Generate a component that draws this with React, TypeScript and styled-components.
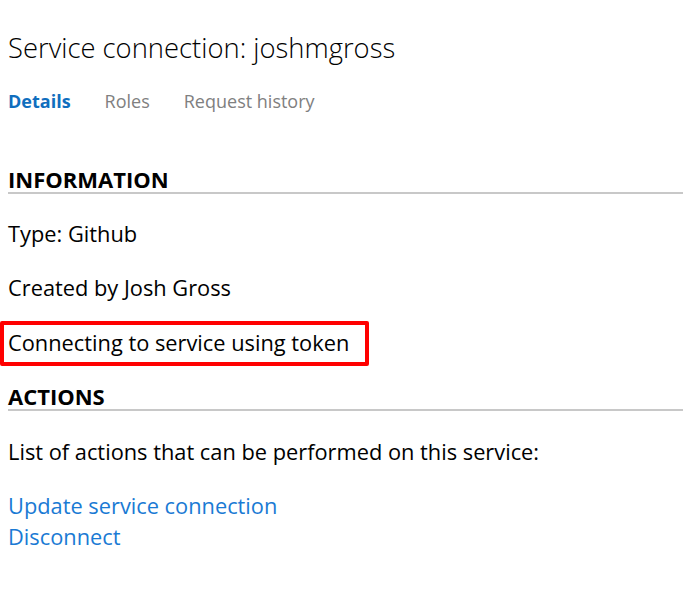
import React from "react";
import styled, { createGlobalStyle } from "styled-components";

const GlobalStyle = createGlobalStyle`
  body {
    margin: 0;
    background: #ffffff;
    font-family: "Open Sans", "Noto Sans", sans-serif;
    color: #000000;
  }
`;

const Page = styled.div`
  display: flex;
  flex-direction: column;
  padding: 28px 0 0 8px;
`;

const Title = styled.h1`
  margin: 0;
  font-size: 27.4px;
  font-weight: 300;
  line-height: 40px;
`;

const Tabs = styled.nav`
  display: flex;
  gap: 34px;
  margin-top: 20px;
`;

const Tab = styled.span<{ $active?: boolean }>`
  font-size: 18px;
  line-height: 26px;
  font-weight: ${(p) => (p.$active ? 700 : 400)};
  color: ${(p) => (p.$active ? "#106ebe" : "#808080")};
`;

const Section = styled.section<{ $top: number }>`
  display: flex;
  flex-direction: column;
  margin-top: ${(p) => p.$top}px;
`;

const SectionHeader = styled.h2`
  margin: 0;
  font-size: 22px;
  font-weight: 700;
  line-height: 22px;
  padding-bottom: 2px;
  border-bottom: 2px solid #c8c8c8;
`;

const Info = styled.p<{ $top?: number }>`
  margin: ${(p) => p.$top ?? 0}px 0 0 0;
  font-size: 21.8px;
  line-height: 28px;
`;

const Highlight = styled.div`
  align-self: flex-start;
  margin-left: -8px;
  padding: 4px 16px 5px 4px;
  border: 4px solid #ff0000;
  border-radius: 2px;
`;

const Actions = styled.div`
  display: flex;
  flex-direction: column;
  margin-top: 24px;
`;

const ActionLink = styled.a`
  font-size: 21.8px;
  line-height: 31px;
  color: #1a7ad4;
  text-decoration: none;
`;

export default function App() {
  return (
    <>
      <GlobalStyle />
      <Page>
        <Title>Service connection: joshmgross</Title>
        <Tabs>
          <Tab $active>Details</Tab>
          <Tab>Roles</Tab>
          <Tab>Request history</Tab>
        </Tabs>
        <Section $top={54}>
          <SectionHeader>INFORMATION</SectionHeader>
          <Info $top={26}>Type: Github</Info>
          <Info $top={26}>Created by Josh Gross</Info>
        </Section>
        <Section $top={19}>
          <Highlight>
            <Info>Connecting to service using token</Info>
          </Highlight>
        </Section>
        <Section $top={19}>
          <SectionHeader>ACTIONS</SectionHeader>
          <Info $top={27}>
            List of actions that can be performed on this service:
          </Info>
          <Actions>
            <ActionLink href="#">Update service connection</ActionLink>
            <ActionLink href="#">Disconnect</ActionLink>
          </Actions>
        </Section>
      </Page>
    </>
  );
}
